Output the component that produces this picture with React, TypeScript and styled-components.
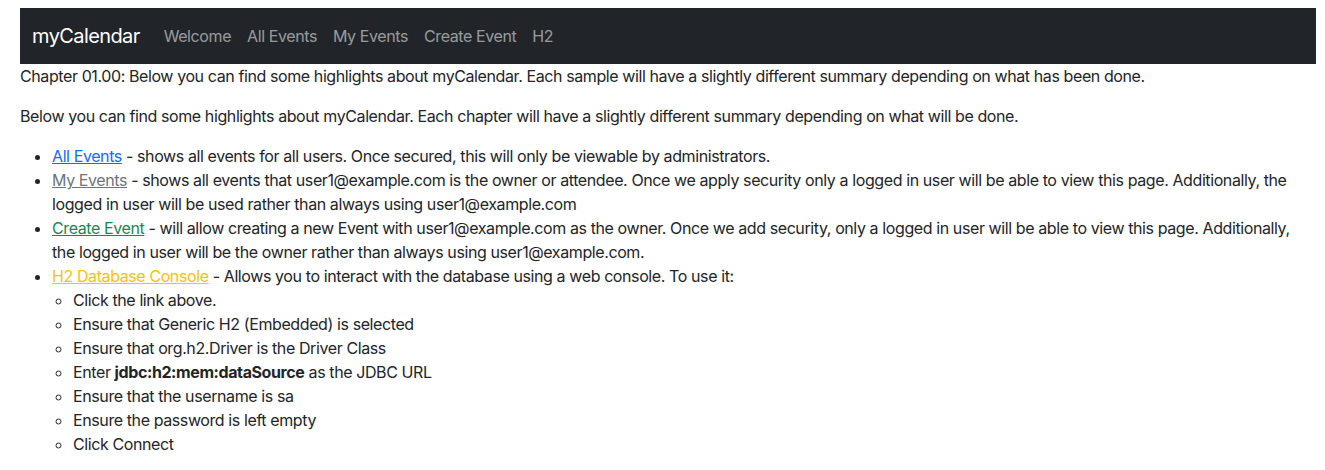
import React from "react";
import styled, { createGlobalStyle } from "styled-components";

const GlobalStyle = createGlobalStyle`
  body {
    margin: 0;
    background: #fff;
    color: #212529;
    font-family: Inter, "Noto Sans", "Liberation Sans", sans-serif;
    font-size: 16px;
    line-height: 24px;
    letter-spacing: -0.025em;
  }
  * { box-sizing: border-box; }
`;

const navItems = ["Welcome", "All Events", "My Events", "Create Event", "H2"];

const steps: React.ReactNode[] = [
  "Click the link above.",
  "Ensure that Generic H2 (Embedded) is selected",
  "Ensure that org.h2.Driver is the Driver Class",
  <>
    Enter <b>jdbc:h2:mem:dataSource</b> as the JDBC URL
  </>,
  "Ensure that the username is sa",
  "Ensure the password is left empty",
  "Click Connect",
];

export default function App() {
  return (
    <>
      <GlobalStyle />
      <Page>
        <Navbar>
          <Brand href="#">myCalendar</Brand>
          <NavList>
            {navItems.map((item) => (
              <NavLink key={item} href="#">
                {item}
              </NavLink>
            ))}
          </NavList>
        </Navbar>
        <Content>
          <Para>
            Chapter 01.00: Below you can find some highlights about myCalendar. Each sample will have a
            slightly different summary depending on what has been done.
          </Para>
          <Para>
            Below you can find some highlights about myCalendar. Each chapter will have a slightly
            different summary depending on what will be done.
          </Para>
          <List>
            <li>
              <Link href="#" $color="#0d6efd">All Events</Link> - shows all events for all users. Once
              secured, this will only be viewable by administrators.
            </li>
            <li>
              <Link href="#" $color="#6c757d">My Events</Link> - shows all events that
              user1@example.com is the owner or attendee. Once we apply security only a logged in user
              will be able to view this page. Additionally, the logged in user will be used rather than
              always using user1@example.com
            </li>
            <li>
              <Link href="#" $color="#198754">Create Event</Link> - will allow creating a new Event with
              user1@example.com as the owner. Once we add security, only a logged in user will be able
              to view this page. Additionally, the logged in user will be the owner rather than always
              using user1@example.com.
            </li>
            <li>
              <Link href="#" $color="#ffc107">H2 Database Console</Link> - Allows you to interact with
              the database using a web console. To use it:
              <SubList>
                {steps.map((s, i) => (
                  <li key={i}>{s}</li>
                ))}
              </SubList>
            </li>
          </List>
        </Content>
      </Page>
    </>
  );
}

const Page = styled.div`
  padding: 8px 9px 0 20px;
`;

const Navbar = styled.nav`
  display: flex;
  align-items: center;
  height: 56px;
  padding: 0 12px;
  background: #212529;
`;

const Brand = styled.a`
  color: #fff;
  font-size: 20px;
  line-height: 30px;
  margin-right: 16px;
  text-decoration: none;
  letter-spacing: -0.03em;
`;

const NavList = styled.div`
  display: flex;
`;

const NavLink = styled.a`
  color: rgba(255, 255, 255, 0.55);
  padding: 8px;
  text-decoration: none;
`;

const Content = styled.main`
  width: 1285px;
`;

const Para = styled.p`
  margin: 0 0 16px;
`;

const List = styled.ul`
  margin: 0;
  padding-left: 32px;
`;

const SubList = styled.ul`
  margin: 0;
  padding-left: 21px;
  list-style-type: circle;
`;

const Link = styled.a<{ $color: string }>`
  color: ${(p) => p.$color};
  text-decoration: underline;
`;
